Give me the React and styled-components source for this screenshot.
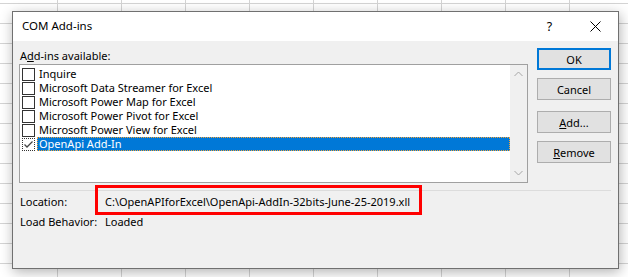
import React from "react";
import styled, { createGlobalStyle } from "styled-components";

const GlobalStyle = createGlobalStyle`
  html, body {
    margin: 0;
    padding: 0;
    background: #ffffff;
  }
  body {
    font-family: "Noto Sans", "Liberation Sans", sans-serif;
    font-size: 11px;
    color: #000;
  }
`;

// excel sheet behind the dialog
const Sheet = styled.div`
  width: 628px;
  height: 277px;
  overflow: hidden;
  padding: 11px 0 0 12px;
  box-sizing: border-box;
  background-color: #fff;
  background-image: linear-gradient(to right, #d4d4d4 1px, transparent 1px),
    linear-gradient(to bottom, #d4d4d4 1px, transparent 1px);
  background-size: 64px 20px;
  background-position: 57px 3px;
`;

const Dialog = styled.div`
  width: 607px;
  height: 258px;
  box-sizing: border-box;
  border: 1px solid #707070;
  background: #f0f0f0;
  box-shadow: 1px 3px 12px rgba(0, 0, 0, 0.3);
  display: flex;
  flex-direction: column;
`;

const TitleBar = styled.div`
  height: 29px;
  background: #fff;
  display: flex;
  align-items: center;
`;

const Title = styled.div`
  flex: 1;
  padding-left: 9px;
  padding-bottom: 2px;
  font-size: 11.5px;
`;

const TitleButton = styled.div`
  width: ${(p) => p.$w}px;
  height: 29px;
  display: flex;
  align-items: center;
  justify-content: center;
  font-size: 12.5px;
`;

const Body = styled.div`
  flex: 1;
  padding: 7px 7px 0 6px;
  display: flex;
  flex-direction: column;
`;

const Top = styled.div`
  display: flex;
  gap: 9px;
`;

const LeftCol = styled.div`
  width: 509px;
  display: flex;
  flex-direction: column;
`;

const Label = styled.div`
  height: 15px;
  line-height: 15px;
  padding-left: 1px;
  margin-bottom: 1px;
`;

const ListBox = styled.div`
  height: 119px;
  box-sizing: border-box;
  border: 1px solid #a0a0a0;
  background: #fff;
  display: flex;
`;

const Items = styled.div`
  flex: 1;
  padding: 2px 0 0 2px;
`;

const Row = styled.div`
  height: 14px;
  display: flex;
  align-items: center;
`;

const Check = styled.div`
  width: 13px;
  height: 13px;
  box-sizing: border-box;
  border: 1px ${(p) => (p.$focus ? "dotted" : "solid")} #333;
  background: #fff;
  margin-right: 2px;
  display: flex;
  align-items: center;
  justify-content: center;
`;

const ItemText = styled.div`
  flex: 1;
  height: 14px;
  line-height: 14px;
  padding-left: 2px;
  box-sizing: border-box;
  background: ${(p) => (p.$selected ? "#0078d7" : "transparent")};
  color: ${(p) => (p.$selected ? "#fff" : "#000")};
  outline: ${(p) => (p.$selected ? "1px dotted #f2a33a" : "none")};
  outline-offset: -1px;
`;

const ScrollBar = styled.div`
  width: 17px;
  background: #f0f0f0;
  display: flex;
  flex-direction: column;
  justify-content: space-between;
  align-items: center;
  padding: 6px 0;
`;

const Buttons = styled.div`
  display: flex;
  flex-direction: column;
  width: 74px;
`;

const Button = styled.div`
  height: 22px;
  box-sizing: border-box;
  margin-top: ${(p) => p.$gap || 0}px;
  border: ${(p) => (p.$default ? "2px solid #0078d7" : "1px solid #adadad")};
  background: #e1e1e1;
  display: flex;
  align-items: center;
  justify-content: center;
`;

const U = styled.span`
  text-decoration: underline;
`;

const Separator = styled.div`
  height: 1px;
  background: #dcdcdc;
  margin-top: 7px;
`;

const InfoRow = styled.div`
  display: flex;
  height: 20px;
  align-items: center;
  padding-left: 1px;
`;

const InfoLabel = styled.div`
  width: 85px;
`;

const Value = styled.div`
  position: relative;
`;

// red annotation box drawn over the location path
const Highlight = styled.div`
  position: absolute;
  left: -10px;
  top: -9px;
  width: 327px;
  height: 30px;
  box-sizing: border-box;
  border: 3px solid #ff0000;
`;

const Chevron = ({ up }) => (
  <svg width="9" height="6" viewBox="0 0 9 6">
    <path
      d={up ? "M0.5 5 L4.5 1 L8.5 5" : "M0.5 1 L4.5 5 L8.5 1"}
      fill="none"
      stroke="#a6a6a6"
      strokeWidth="1"
    />
  </svg>
);

const items = [
  "Inquire",
  "Microsoft Data Streamer for Excel",
  "Microsoft Power Map for Excel",
  "Microsoft Power Pivot for Excel",
  "Microsoft Power View for Excel",
  "OpenApi Add-In",
];

export default function App() {
  return (
    <Sheet>
      <GlobalStyle />
      <Dialog>
        <TitleBar>
          <Title>COM Add-ins</Title>
          <TitleButton $w={45}>?</TitleButton>
          <TitleButton $w={46}>
            <svg width="11" height="11" viewBox="0 0 11 11">
              <path d="M0.5 0.5 L10.5 10.5 M10.5 0.5 L0.5 10.5" stroke="#000" strokeWidth="1" />
            </svg>
          </TitleButton>
        </TitleBar>
        <Body>
          <Top>
            <LeftCol>
              <Label>
                A<U>d</U>d-ins available:
              </Label>
              <ListBox>
                <Items>
                  {items.map((name, i) => {
                    const selected = i === items.length - 1;
                    return (
                      <Row key={name}>
                        <Check $focus={selected}>
                          {selected && (
                            <svg width="11" height="11" viewBox="0 0 11 11">
                              <path d="M1.5 5.5 L4 8 L9.5 2.5" fill="none" stroke="#444" strokeWidth="1.3" />
                            </svg>
                          )}
                        </Check>
                        <ItemText $selected={selected}>{name}</ItemText>
                      </Row>
                    );
                  })}
                </Items>
                <ScrollBar>
                  <Chevron up />
                  <Chevron />
                </ScrollBar>
              </ListBox>
            </LeftCol>
            <Buttons>
              <Button $default>OK</Button>
              <Button $gap={8}>Cancel</Button>
              <Button $gap={11}>
                <span>
                  <U>A</U>dd...
                </span>
              </Button>
              <Button $gap={8}>
                <span>
                  <U>R</U>emove
                </span>
              </Button>
            </Buttons>
          </Top>
          <Separator />
          <InfoRow>
            <InfoLabel>Location:</InfoLabel>
            <Value>
              C:\OpenAPIforExcel\OpenApi-AddIn-32bits-June-25-2019.xll
              <Highlight />
            </Value>
          </InfoRow>
          <InfoRow>
            <InfoLabel>Load Behavior:</InfoLabel>
            <Value>Loaded</Value>
          </InfoRow>
        </Body>
      </Dialog>
    </Sheet>
  );
}
